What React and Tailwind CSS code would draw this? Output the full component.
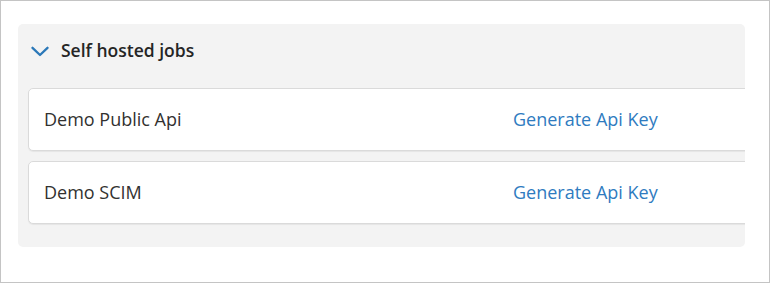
const jobs = ['Demo Public Api', 'Demo SCIM']

function Chevron() {
  return (
    <svg width="18" height="11" viewBox="0 0 18 11" fill="none" className="shrink-0">
      <polyline
        points="1.5,1.8 9,9 16.5,1.8"
        stroke="#2b78b8"
        strokeWidth="2.3"
        strokeLinecap="round"
        strokeLinejoin="round"
      />
    </svg>
  )
}

function JobRow({ name }) {
  return (
    <div className="-mr-[24px] flex h-[63px] items-center rounded-[5px] border border-[#dadada] bg-white pl-[15px] shadow-[0_1px_1px_rgba(0,0,0,0.06)]">
      <div className="w-[469px] text-[18px] text-[#323130]">{name}</div>
      <button className="text-[18px] text-[#2f7bbf]">Generate Api Key</button>
    </div>
  )
}

export default function App() {
  return (
    <div
      className="h-[283px] w-[770px] border border-[#c4c4c4] bg-white pl-[17px] pt-[23px]"
      style={{ fontFamily: '"Open Sans", "Noto Sans", sans-serif' }}
    >
      <div className="w-[727px] overflow-hidden rounded-[5px] bg-[#f3f3f3] px-[10px] pb-[23px]">
        <div className="flex h-[64px] items-start gap-[12px] pl-[3px] pt-[14px]">
          <div className="flex h-[24px] items-center pt-[2px]">
            <Chevron />
          </div>
          <span className="text-[17.5px] leading-[24px] font-semibold text-[#252525]">Self hosted jobs</span>
        </div>
        <div className="flex flex-col gap-[10px]">
          {jobs.map((j) => (
            <JobRow key={j} name={j} />
          ))}
        </div>
      </div>
    </div>
  )
}
